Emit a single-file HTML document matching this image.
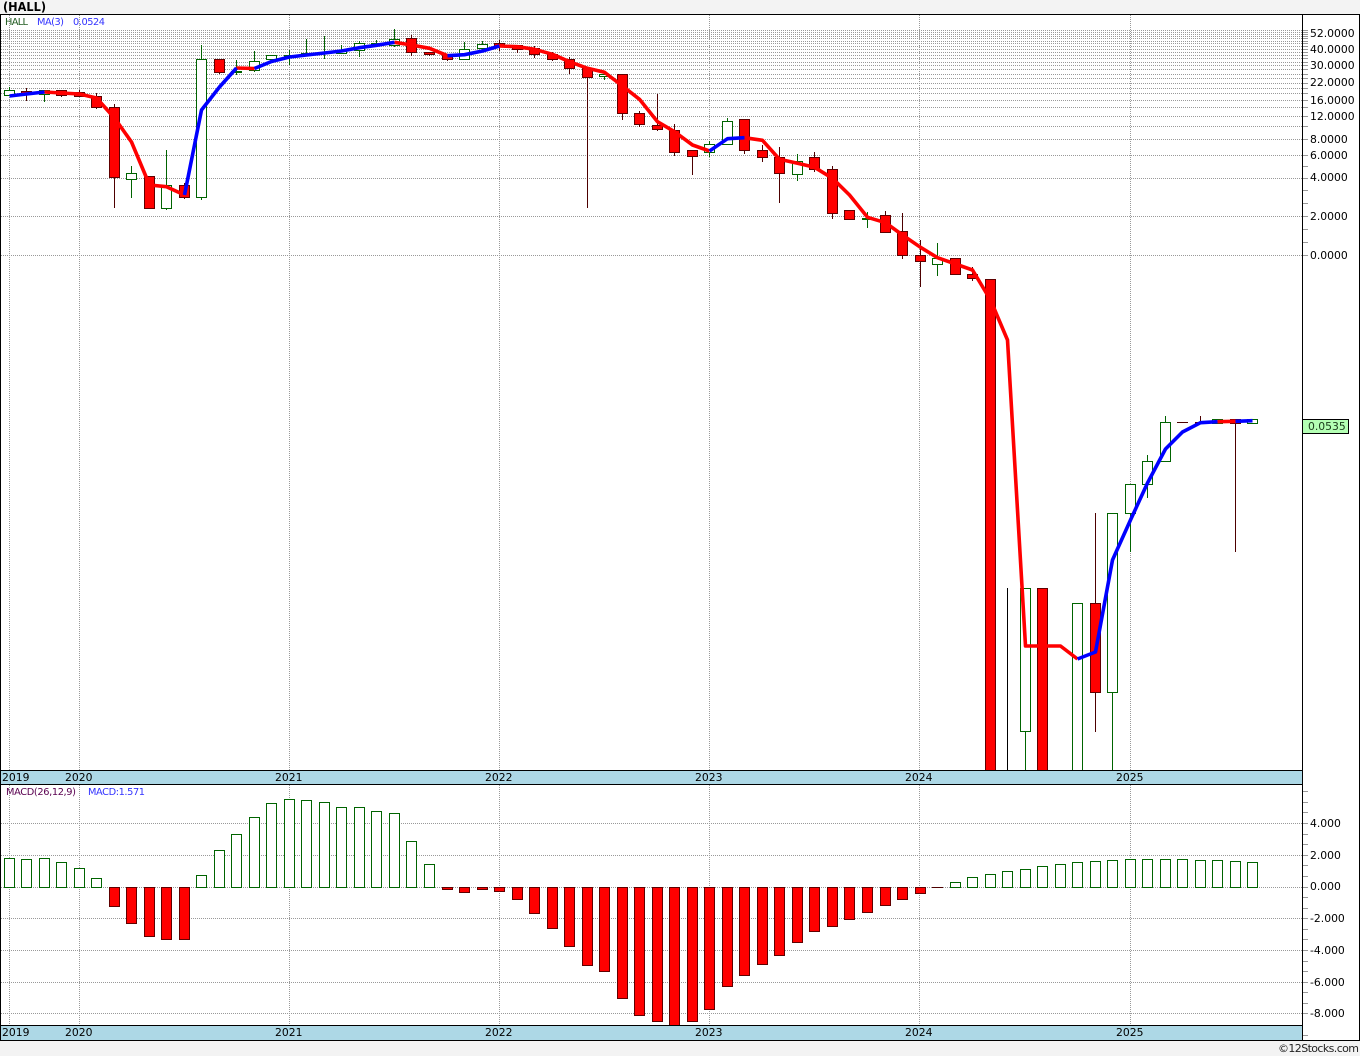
<!DOCTYPE html>
<html><head><meta charset="utf-8"><title>HALL</title>
<style>
html,body{margin:0;padding:0;background:#f3f3f3;width:1360px;height:1056px;overflow:hidden}
svg{display:block;position:absolute;left:0;top:0}
text{font-family:"DejaVu Sans","Liberation Sans",sans-serif;font-size:10.8px;fill:#000}
</style></head><body>
<svg width="1360" height="1056" viewBox="0 0 1360 1056" xmlns="http://www.w3.org/2000/svg">
<rect x="0" y="14" width="1360" height="1027" fill="#fff"/>
<text x="3" y="11" style="font-weight:bold;font-size:12.5px" textLength="43" lengthAdjust="spacingAndGlyphs">(HALL)</text>

<g shape-rendering="crispEdges" fill="none">
<path stroke="#999" stroke-dasharray="1 1" d="M1 30.5H1303M1 32.5H1303M1 34.5H1303M1 36.5H1303M1 38.5H1303M1 41.5H1303M1 43.5H1303M1 46.5H1303M1 49.5H1303M1 52.5H1303M1 55.5H1303M1 58.5H1303M1 62.5H1303M1 65.5H1303M1 69.5H1303M1 74.5H1303M1 78.5H1303M1 83.5H1303M1 88.5H1303M1 93.5H1303M1 100.5H1303M1 107.5H1303M1 116.5H1303M1 126.5H1303M1 139.5H1303M1 155.5H1303M1 178.5H1303M1 216.5H1303M1 255.5H1303M1 823.5H1303M1 855.5H1303M1 887.5H1303M1 918.5H1303M1 950.5H1303M1 982.5H1303M1 1013.5H1303"/>
<path stroke="#999" stroke-dasharray="1 1" d="M9.5 15V770M79.5 15V770M289.5 15V770M499.5 15V770M709.5 15V770M919.5 15V770M1130.5 15V770M9.5 785V1025M79.5 785V1025M289.5 785V1025M499.5 785V1025M709.5 785V1025M919.5 785V1025M1130.5 785V1025"/>
<path stroke="#999" d="M1303 30.5h5M1303 32.5h5M1303 34.5h5M1303 36.5h5M1303 38.5h5M1303 41.5h5M1303 43.5h5M1303 46.5h5M1303 49.5h5M1303 52.5h5M1303 55.5h5M1303 58.5h5M1303 62.5h5M1303 65.5h5M1303 69.5h5M1303 74.5h5M1303 78.5h5M1303 83.5h5M1303 88.5h5M1303 93.5h5M1303 100.5h5M1303 107.5h5M1303 116.5h5M1303 126.5h5M1303 139.5h5M1303 155.5h5M1303 166.5h5M1303 178.5h5M1303 190.5h5M1303 203.5h5M1303 216.5h5M1303 229.5h5M1303 242.5h5M1303 255.5h5M1303 791.5h5M1303 802.5h5M1303 812.5h5M1303 823.5h5M1303 834.5h5M1303 844.5h5M1303 855.5h5M1303 865.5h5M1303 876.5h5M1303 887.5h5M1303 897.5h5M1303 908.5h5M1303 918.5h5M1303 929.5h5M1303 939.5h5M1303 950.5h5M1303 961.5h5M1303 971.5h5M1303 982.5h5M1303 992.5h5M1303 1003.5h5M1303 1013.5h5M1303 1035.5h5"/>

<!-- green wicks -->
<path stroke="#006400" d="M9.5 87V96M44.5 90V102M131.5 166V198M166.5 150V210M201.5 45V200M236.5 60V75M254.5 51V72M289.5 50V65M306.5 39V56M324.5 36V59M341.5 45V54M359.5 41V57M376.5 40V47M394.5 29V47M464.5 42V60M482.5 41V51M604.5 74V80M709.5 141V157M727.5 118V122M797.5 154V181M867.5 212V228M937.5 243V276M1025.5 731V770M1112.5 692V770M1130.5 513V552M1147.5 455V498M1165.5 416V423"/>
<!-- red wicks -->
<path stroke="#4d0000" d="M26.5 88V101M61.5 90V97M79.5 90V97M96.5 93V109M114.5 104V208M184.5 183V199M219.5 59V74M411.5 35V56M429.5 52V56M447.5 54V61M499.5 40V51M517.5 45V53M534.5 46V58M552.5 52V61M569.5 57V74M587.5 68V208M622.5 74V120M639.5 111V127M657.5 94V131M674.5 124V156M692.5 150V175M744.5 119V154M762.5 145V162M779.5 147V203M814.5 152V172M832.5 166V219M885.5 211V233M902.5 213V259M920.5 240V287M972.5 267V281M1095.5 513V732M1200.5 416V424M1235.5 419V552"/>
<path stroke="#000" d="M1007.5 588V770"/>
<path stroke="#4d0000" d="M1177 422.5h11"/>

<!-- green bodies -->
<g fill="#fff" stroke="#006400">
<path d="M4.5 90.5h10V95.5h-10zM39.5 90.5h10V94.5h-10zM126.5 173.5h10V179.5h-10zM161.5 185.5h10V208.5h-10zM196.5 59.5h10V197.5h-10zM231.5 71.5h10V72.5h-10zM249.5 61.5h10V70.5h-10zM266.5 55.5h10V59.5h-10zM284.5 55.5h10V56.5h-10zM301.5 53.5h10V54.5h-10zM319.5 52.5h10V53.5h-10zM336.5 50.5h10V53.5h-10zM354.5 43.5h10V50.5h-10zM371.5 43.5h10V44.5h-10zM389.5 39.5h10V45.5h-10zM459.5 49.5h10V59.5h-10zM477.5 44.5h10V48.5h-10zM599.5 74.5h10V76.5h-10zM704.5 144.5h10V152.5h-10zM722.5 121.5h10V144.5h-10zM792.5 161.5h10V174.5h-10zM862.5 218.5h10V219.5h-10zM932.5 258.5h10V264.5h-10zM1020.5 588.5h10V731.5h-10zM1072.5 603.5h10V772h-10zM1107.5 513.5h10V692.5h-10zM1125.5 484.5h10V513.5h-10zM1142.5 461.5h10V484.5h-10zM1160.5 422.5h10V461.5h-10zM1212.5 419.5h10V423.5h-10zM1247.5 419.5h10V423.5h-10z"/>
</g>
<!-- red bodies -->
<g fill="#f00" stroke="#600000">
<path d="M21.5 91.5h10V94.5h-10zM56.5 90.5h10V95.5h-10zM74.5 92.5h10V96.5h-10zM91.5 96.5h10V107.5h-10zM109.5 107.5h10V177.5h-10zM144.5 176.5h10V208.5h-10zM179.5 185.5h10V197.5h-10zM214.5 59.5h10V72.5h-10zM406.5 38.5h10V52.5h-10zM424.5 52.5h10V54.5h-10zM442.5 54.5h10V59.5h-10zM494.5 43.5h10V46.5h-10zM512.5 45.5h10V49.5h-10zM529.5 48.5h10V54.5h-10zM547.5 54.5h10V59.5h-10zM564.5 59.5h10V68.5h-10zM582.5 68.5h10V77.5h-10zM617.5 74.5h10V113.5h-10zM634.5 113.5h10V124.5h-10zM652.5 125.5h10V129.5h-10zM669.5 130.5h10V152.5h-10zM687.5 150.5h10V156.5h-10zM739.5 119.5h10V150.5h-10zM757.5 150.5h10V157.5h-10zM774.5 157.5h10V173.5h-10zM809.5 157.5h10V169.5h-10zM827.5 169.5h10V213.5h-10zM844.5 210.5h10V219.5h-10zM880.5 215.5h10V232.5h-10zM897.5 231.5h10V255.5h-10zM915.5 255.5h10V261.5h-10zM950.5 258.5h10V274.5h-10zM967.5 274.5h10V278.5h-10zM985.5 279.5h10V772h-10zM1037.5 588.5h10V772h-10zM1090.5 603.5h10V692.5h-10zM1195.5 422.5h10V423.5h-10zM1230.5 419.5h10V423.5h-10z"/>
</g>
</g>

<!-- moving average -->
<g fill="none" stroke-width="3.6" stroke-linejoin="round" stroke-linecap="butt">
<polyline stroke="#f00" points="44.5,92 61.5,93 79.5,94 96.5,98 114.5,118 131.5,142 149.5,185 166.5,186.7 184.5,195"/>
<polyline stroke="#f00" points="236.5,68 254.5,68.5"/>
<polyline stroke="#f00" points="394.5,42.3 411.5,45 429.5,48.3 447.5,55.7"/>
<polyline stroke="#f00" points="499.5,46 517.5,46.7 534.5,49.3 552.5,54.3 569.5,61.7 587.5,68.3 604.5,72.3 622.5,86 639.5,99.3 657.5,121.7 674.5,131.7 692.5,145 709.5,151"/>
<polyline stroke="#f00" points="744.5,137.7 762.5,140.3 779.5,159.3 797.5,163.3 814.5,167.3 832.5,178.3 849.5,195 867.5,217.3 885.5,222.7 902.5,235 920.5,247.3 937.5,257.7 955.5,264 972.5,270 990.5,300 1007.5,340 1025.5,646 1042.5,646 1060.5,646 1077.5,659"/>
<polyline stroke="#f00" points="1217.5,421.7 1235.5,421.3"/>
<polyline stroke="#00f" points="9.5,96 26.5,94 44.5,92"/>
<polyline stroke="#00f" points="184.5,195 201.5,110 219.5,87 236.5,68"/>
<polyline stroke="#00f" points="254.5,68.5 271.5,61.5 289.5,57 306.5,55 324.5,53 341.5,51 359.5,47.7 376.5,45.3 394.5,42.3"/>
<polyline stroke="#00f" points="447.5,55.7 464.5,54.7 482.5,51 499.5,46"/>
<polyline stroke="#00f" points="709.5,151 727.5,138.7 744.5,137.7"/>
<polyline stroke="#00f" points="1077.5,659 1095.5,652 1112.5,560 1130.5,520 1147.5,483 1165.5,449 1182.5,432 1200.5,422.7 1217.5,421.7"/>
<polyline stroke="#00f" points="1235.5,421.3 1252.5,420.7"/>
</g>

<!-- MACD histogram -->
<g shape-rendering="crispEdges">
<path fill="#fff" stroke="#006400" d="M4.5 858.5h10V887.5h-10zM21.5 859.5h10V887.5h-10zM39.5 858.5h10V887.5h-10zM56.5 862.5h10V887.5h-10zM74.5 868.5h10V887.5h-10zM91.5 878.5h10V887.5h-10zM196.5 875.5h10V887.5h-10zM214.5 850.5h10V887.5h-10zM231.5 834.5h10V887.5h-10zM249.5 817.5h10V887.5h-10zM266.5 803.5h10V887.5h-10zM284.5 799.5h10V887.5h-10zM301.5 800.5h10V887.5h-10zM319.5 802.5h10V887.5h-10zM336.5 807.5h10V887.5h-10zM354.5 807.5h10V887.5h-10zM371.5 811.5h10V887.5h-10zM389.5 813.5h10V887.5h-10zM406.5 841.5h10V887.5h-10zM424.5 864.5h10V887.5h-10zM950.5 882.5h10V887.5h-10zM967.5 877.5h10V887.5h-10zM985.5 874.5h10V887.5h-10zM1002.5 871.5h10V887.5h-10zM1020.5 869.5h10V887.5h-10zM1037.5 866.5h10V887.5h-10zM1055.5 864.5h10V887.5h-10zM1072.5 862.5h10V887.5h-10zM1090.5 861.5h10V887.5h-10zM1107.5 860.5h10V887.5h-10zM1125.5 859.5h10V887.5h-10zM1142.5 859.5h10V887.5h-10zM1160.5 859.5h10V887.5h-10zM1177.5 859.5h10V887.5h-10zM1195.5 860.5h10V887.5h-10zM1212.5 860.5h10V887.5h-10zM1230.5 861.5h10V887.5h-10zM1247.5 862.5h10V887.5h-10z"/>
<path fill="#f00" stroke="#600000" d="M109.5 887.5h10V906.5h-10zM126.5 887.5h10V923.5h-10zM144.5 887.5h10V936.5h-10zM161.5 887.5h10V939.5h-10zM179.5 887.5h10V939.5h-10zM442.5 887.5h10V889.5h-10zM459.5 887.5h10V892.5h-10zM477.5 887.5h10V889.5h-10zM494.5 887.5h10V891.5h-10zM512.5 887.5h10V899.5h-10zM529.5 887.5h10V913.5h-10zM547.5 887.5h10V928.5h-10zM564.5 887.5h10V946.5h-10zM582.5 887.5h10V965.5h-10zM599.5 887.5h10V971.5h-10zM617.5 887.5h10V998.5h-10zM634.5 887.5h10V1015.5h-10zM652.5 887.5h10V1021.5h-10zM669.5 887.5h10V1027h-10zM687.5 887.5h10V1021.5h-10zM704.5 887.5h10V1009.5h-10zM722.5 887.5h10V986.5h-10zM739.5 887.5h10V975.5h-10zM757.5 887.5h10V964.5h-10zM774.5 887.5h10V955.5h-10zM792.5 887.5h10V942.5h-10zM809.5 887.5h10V931.5h-10zM827.5 887.5h10V926.5h-10zM844.5 887.5h10V919.5h-10zM862.5 887.5h10V912.5h-10zM880.5 887.5h10V905.5h-10zM897.5 887.5h10V899.5h-10zM915.5 887.5h10V893.5h-10z"/>
<path stroke="#4d0000" d="M932 887.5h11"/>

<!-- date bars & frame -->
<rect x="1" y="770" width="1302" height="15" fill="#add8e6"/>
<rect x="1" y="1025" width="1302" height="15" fill="#add8e6"/>
<path fill="none" stroke="#000" d="M0 14.5H1360M0.5 14V1041M1302.5 14V1041M1359.5 14V1041M0 1040.5H1360M1 770.5H1303M1 784.5H1303M1 1025.5H1303"/>
</g>

<!-- legend -->
<text x="5" y="25" textLength="23" style="font-size:9.8px;fill:#1f5a1f">HALL</text>
<text x="37" y="25" textLength="27" style="font-size:9.8px;fill:#3333ff">MA(3)</text>
<text x="73" y="25" textLength="32" style="font-size:9.8px;fill:#3333ff">0.0524</text>
<text x="6" y="795" textLength="70" style="font-size:9.8px;fill:#5a0050">MACD(26,12,9)</text>
<text x="88" y="795" textLength="57" style="font-size:9.8px;fill:#3333ff">MACD:1.571</text>

<!-- price axis -->
<text x="1310" y="37">52.0000</text>
<text x="1310" y="53">40.0000</text>
<text x="1310" y="69">30.0000</text>
<text x="1310" y="86">22.0000</text>
<text x="1310" y="104">16.0000</text>
<text x="1310" y="120">12.0000</text>
<text x="1310" y="143">8.0000</text>
<text x="1310" y="159">6.0000</text>
<text x="1310" y="181">4.0000</text>
<text x="1310" y="220">2.0000</text>
<text x="1310" y="259">0.0000</text>
<rect x="1302.5" y="419.5" width="46" height="14" fill="#b4ffb4" stroke="#000" shape-rendering="crispEdges"/>
<text x="1308" y="430" style="fill:#1a3a1a">0.0535</text>

<!-- macd axis -->
<text x="1310" y="827">4.000</text>
<text x="1310" y="859">2.000</text>
<text x="1310" y="890">0.000</text>
<text x="1310" y="922">-2.000</text>
<text x="1310" y="954">-4.000</text>
<text x="1310" y="986">-6.000</text>
<text x="1310" y="1017">-8.000</text>

<!-- dates -->
<text x="2" y="781">2019</text><text x="65" y="781">2020</text><text x="275" y="781">2021</text><text x="485" y="781">2022</text><text x="695" y="781">2023</text><text x="905" y="781">2024</text><text x="1116" y="781">2025</text>
<text x="2" y="1036">2019</text><text x="65" y="1036">2020</text><text x="275" y="1036">2021</text><text x="485" y="1036">2022</text><text x="695" y="1036">2023</text><text x="905" y="1036">2024</text><text x="1116" y="1036">2025</text>

<text x="1278" y="1052" textLength="81" style="font-size:11px;fill:#222">©12Stocks.com</text>
</svg>
</body></html>
